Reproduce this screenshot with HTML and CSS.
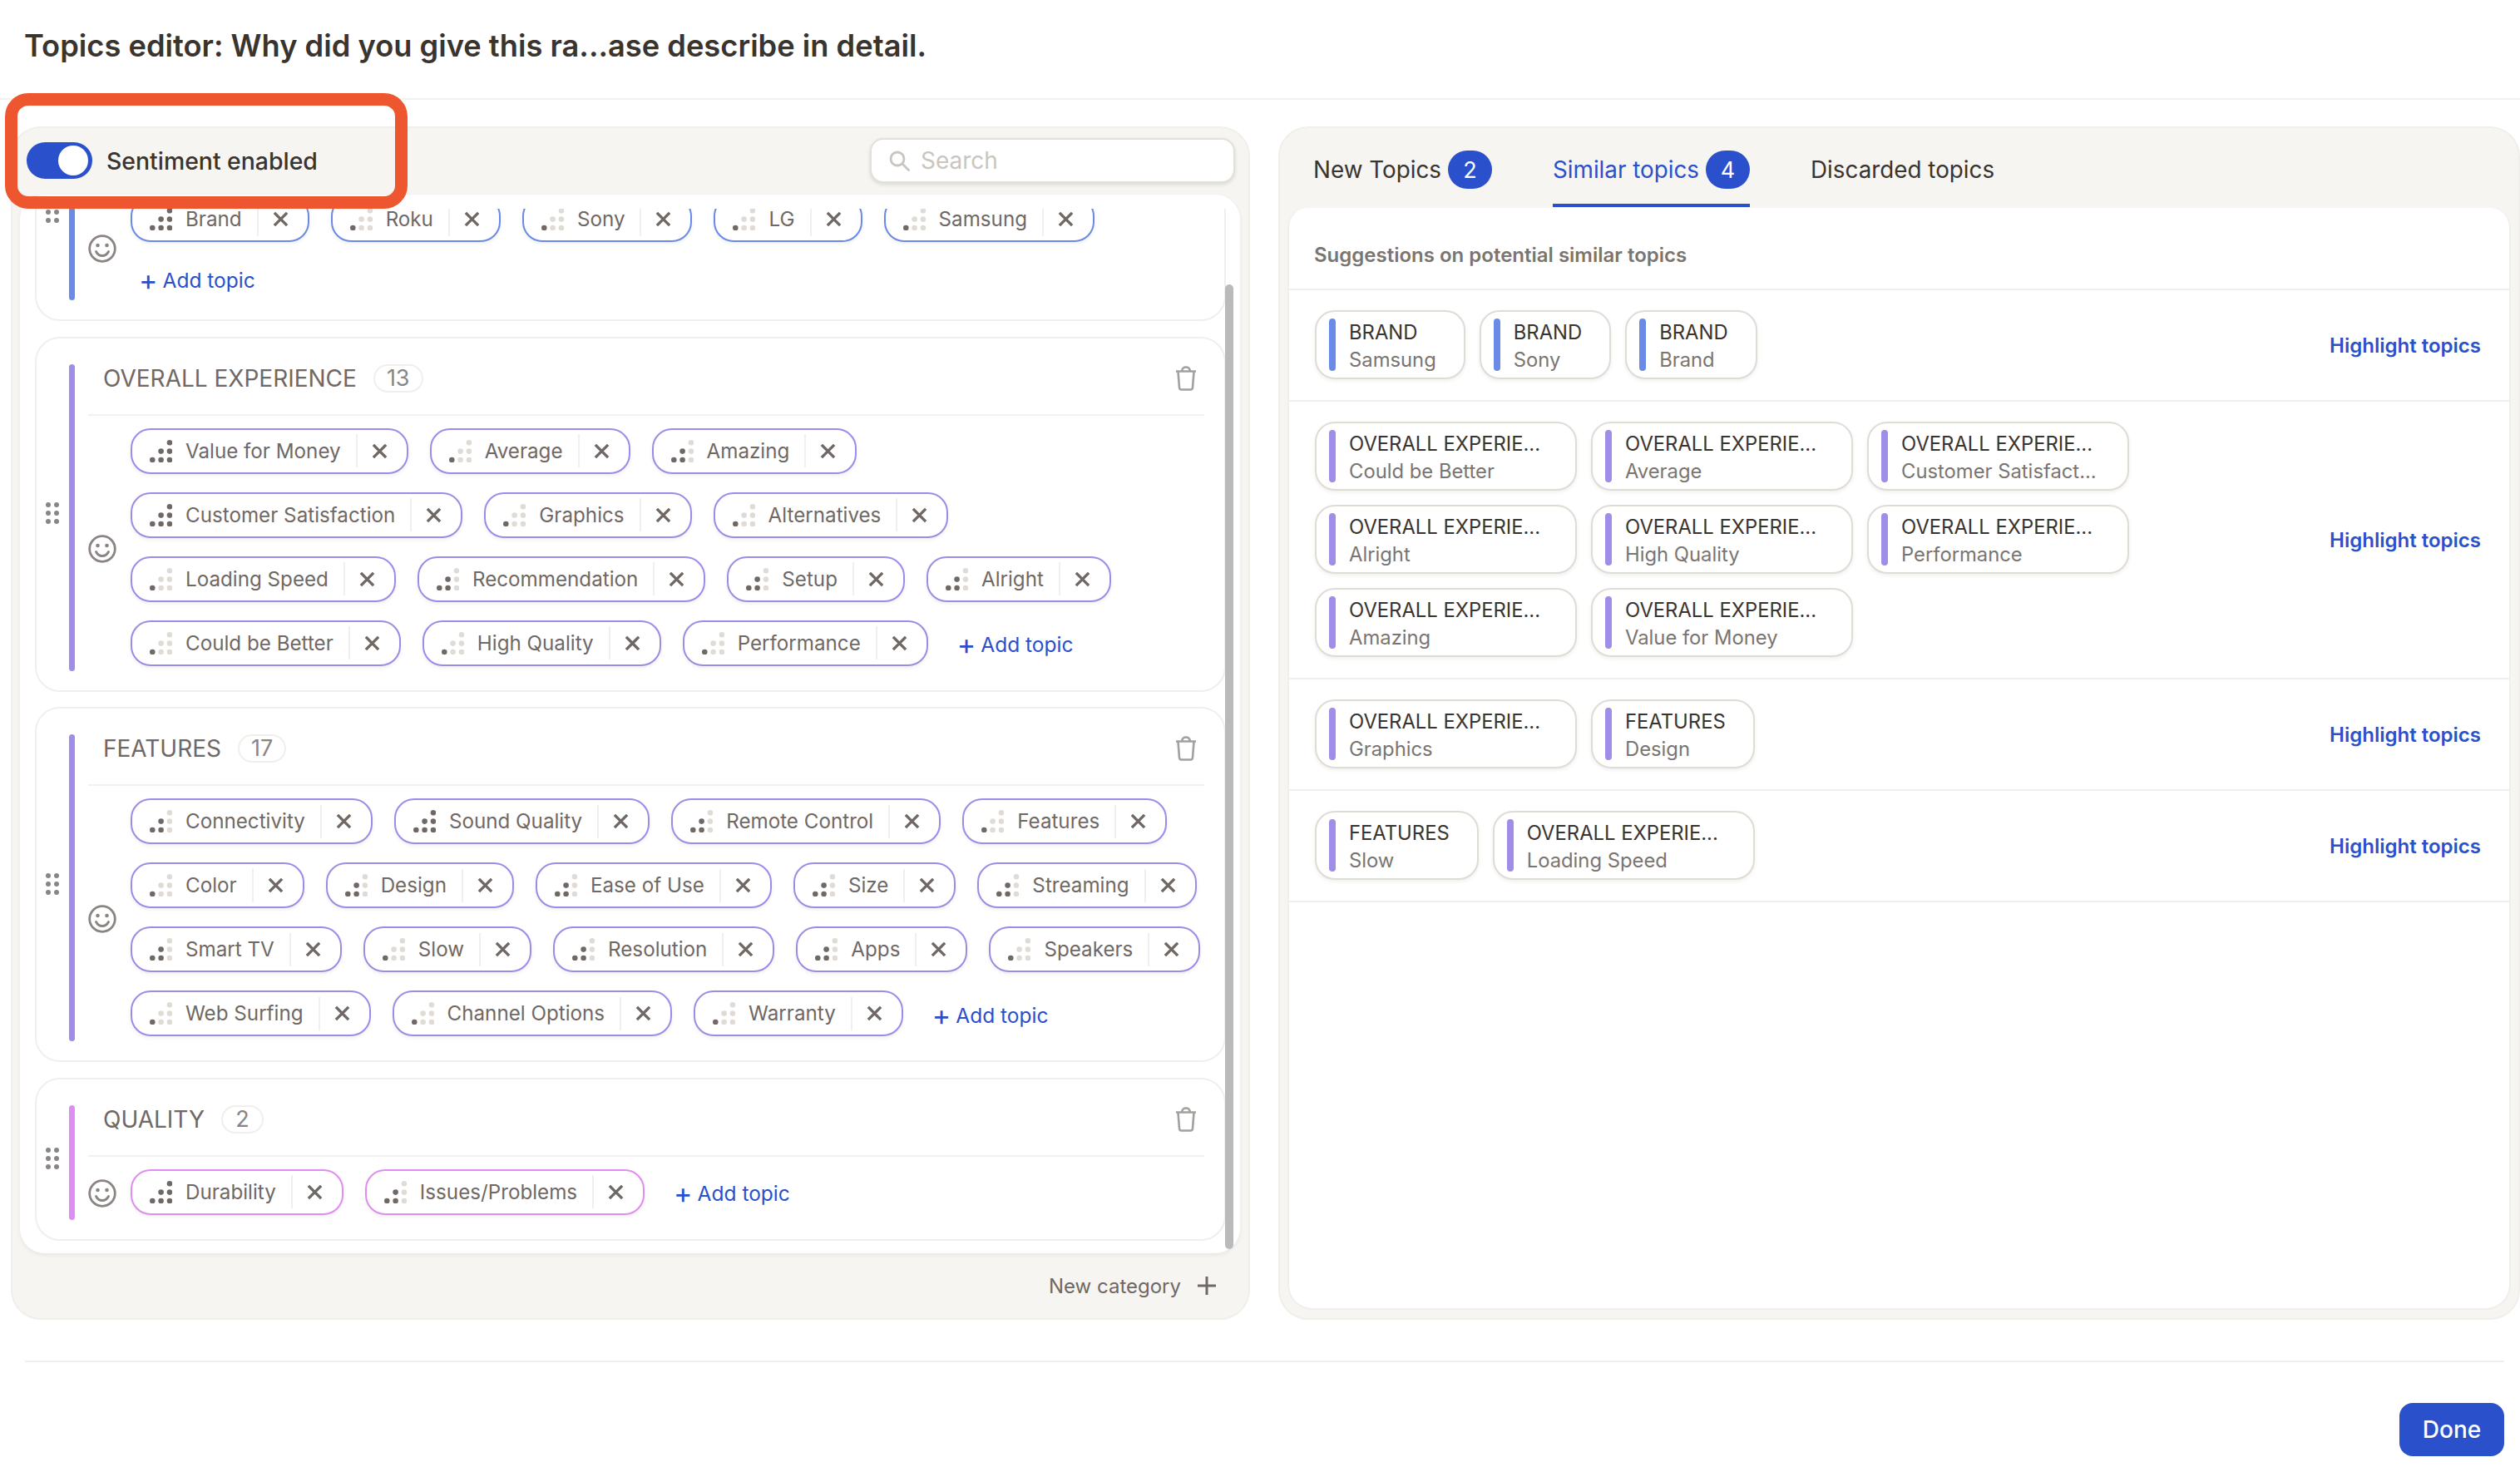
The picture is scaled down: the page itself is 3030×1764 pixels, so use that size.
FILE: index.html
```html
<!DOCTYPE html>
<html lang="en">
<head>
<meta charset="utf-8">
<title>Topics editor</title>
<link rel="stylesheet" href="styles.css">
</head>
<body>
<svg class="sprite" width="0" height="0" aria-hidden="true">
  <symbol id="sig1" viewBox="0 0 27 27"><circle class="d" cx="3.3" cy="24" r="3.3"/><circle class="l" cx="13.6" cy="24" r="3.3"/><circle class="l" cx="13.6" cy="13.6" r="3.3"/><circle class="l" cx="24" cy="24" r="3.3"/><circle class="l" cx="24" cy="13.6" r="3.3"/><circle class="l" cx="24" cy="3.3" r="3.3"/></symbol>
  <symbol id="sig2" viewBox="0 0 27 27"><circle class="d" cx="3.3" cy="24" r="3.3"/><circle class="d" cx="13.6" cy="24" r="3.3"/><circle class="d" cx="13.6" cy="13.6" r="3.3"/><circle class="l" cx="24" cy="24" r="3.3"/><circle class="l" cx="24" cy="13.6" r="3.3"/><circle class="l" cx="24" cy="3.3" r="3.3"/></symbol>
  <symbol id="sig3" viewBox="0 0 27 27"><circle class="d" cx="3.3" cy="24" r="3.3"/><circle class="d" cx="13.6" cy="24" r="3.3"/><circle class="d" cx="13.6" cy="13.6" r="3.3"/><circle class="d" cx="24" cy="24" r="3.3"/><circle class="d" cx="24" cy="13.6" r="3.3"/><circle class="d" cx="24" cy="3.3" r="3.3"/></symbol>
  <symbol id="x" viewBox="0 0 20 20"><path d="M2 2 18 18M18 2 2 18" fill="none" stroke="#6f6864" stroke-width="3.6"/></symbol>
  <symbol id="drag" viewBox="0 0 16 26"><g fill="#8a8582"><circle cx="3" cy="3" r="3"/><circle cx="13" cy="3" r="3"/><circle cx="3" cy="13" r="3"/><circle cx="13" cy="13" r="3"/><circle cx="3" cy="23" r="3"/><circle cx="13" cy="23" r="3"/></g></symbol>
  <symbol id="smile" viewBox="0 0 34 34"><circle cx="17" cy="17" r="15.3" fill="none" stroke="#8a8582" stroke-width="2.8"/><circle cx="11.5" cy="13" r="2.3" fill="#8a8582"/><circle cx="22.5" cy="13" r="2.3" fill="#8a8582"/><path d="M9.5 20.5c1.600 3.200 4.300 5 7.500 5s5.900-1.800 7.500-5" fill="none" stroke="#8a8582" stroke-width="2.8" stroke-linecap="round"/></symbol>
  <symbol id="trash" viewBox="0 0 26 30"><path d="M1 6.500h24M8 6c.5-3 2-4.500 5-4.500S17.500 3 18 6M3.500 7l1.500 19c.1 1.500 1 2.500 2.500 2.500h11c1.500 0 2.400-1 2.500-2.500l1.500-19" fill="none" stroke="#a3a09d" stroke-width="2.6" stroke-linejoin="round"/></symbol>
</svg>

<header class="title-bar">
  <h1 class="title">Topics editor: Why did you give this ra...ase describe in detail.</h1>
</header>

<main class="workspace">
  <section class="panel panel-left">
    <div class="panel-head">
      <div class="sentiment">
        <span class="toggle"><span class="knob"></span></span>
        <span class="sentiment-label">Sentiment enabled</span>
      </div>
      <div class="search">
        <svg class="search-icon" viewBox="0 0 25 25"><circle cx="10" cy="10" r="8" fill="none" stroke="#c9c5c0" stroke-width="2.8"/><path d="M16 16l7.500 7.500" stroke="#c9c5c0" stroke-width="2.8" stroke-linecap="round"/></svg>
        <span>Search</span>
      </div>
    </div>

    <div class="list-wrap">
      <div class="list">
        <article class="card card-brand card-scrolled">
          <svg class="drag"><use href="#drag"/></svg>
          <span class="bar"></span>
          <div class="card-body">
            <div class="topics">
              <svg class="smile smile-low"><use href="#smile"/></svg>
              <div class="chips">
                <div class="chip-row">
                  <span class="chip"><svg class="sig"><use href="#sig3"/></svg><span class="chip-text">Brand</span><span class="chip-x"><svg><use href="#x"/></svg></span></span>
                  <span class="chip"><svg class="sig"><use href="#sig1"/></svg><span class="chip-text">Roku</span><span class="chip-x"><svg><use href="#x"/></svg></span></span>
                  <span class="chip"><svg class="sig"><use href="#sig1"/></svg><span class="chip-text">Sony</span><span class="chip-x"><svg><use href="#x"/></svg></span></span>
                  <span class="chip"><svg class="sig"><use href="#sig1"/></svg><span class="chip-text">LG</span><span class="chip-x"><svg><use href="#x"/></svg></span></span>
                  <span class="chip"><svg class="sig"><use href="#sig1"/></svg><span class="chip-text">Samsung</span><span class="chip-x"><svg><use href="#x"/></svg></span></span>
                </div>
                <div class="chip-row chip-row-add">
                  <span class="add-topic add-topic-own"><span class="add-plus">+</span>Add topic</span>
                </div>
              </div>
            </div>
          </div>
        </article>

        <article class="card card-overall">
          <svg class="drag"><use href="#drag"/></svg>
          <span class="bar"></span>
          <div class="card-body">
            <div class="card-head"><span class="cat-name">OVERALL EXPERIENCE</span><span class="count">13</span><svg class="trash"><use href="#trash"/></svg></div>
            <div class="topics">
              <svg class="smile"><use href="#smile"/></svg>
              <div class="chips">
                <div class="chip-row">
                  <span class="chip"><svg class="sig"><use href="#sig3"/></svg><span class="chip-text">Value for Money</span><span class="chip-x"><svg><use href="#x"/></svg></span></span>
                  <span class="chip"><svg class="sig"><use href="#sig1"/></svg><span class="chip-text">Average</span><span class="chip-x"><svg><use href="#x"/></svg></span></span>
                  <span class="chip"><svg class="sig"><use href="#sig2"/></svg><span class="chip-text">Amazing</span><span class="chip-x"><svg><use href="#x"/></svg></span></span>
                </div>
                <div class="chip-row">
                  <span class="chip"><svg class="sig"><use href="#sig3"/></svg><span class="chip-text">Customer Satisfaction</span><span class="chip-x"><svg><use href="#x"/></svg></span></span>
                  <span class="chip"><svg class="sig"><use href="#sig1"/></svg><span class="chip-text">Graphics</span><span class="chip-x"><svg><use href="#x"/></svg></span></span>
                  <span class="chip"><svg class="sig"><use href="#sig1"/></svg><span class="chip-text">Alternatives</span><span class="chip-x"><svg><use href="#x"/></svg></span></span>
                </div>
                <div class="chip-row">
                  <span class="chip"><svg class="sig"><use href="#sig1"/></svg><span class="chip-text">Loading Speed</span><span class="chip-x"><svg><use href="#x"/></svg></span></span>
                  <span class="chip"><svg class="sig"><use href="#sig2"/></svg><span class="chip-text">Recommendation</span><span class="chip-x"><svg><use href="#x"/></svg></span></span>
                  <span class="chip"><svg class="sig"><use href="#sig2"/></svg><span class="chip-text">Setup</span><span class="chip-x"><svg><use href="#x"/></svg></span></span>
                  <span class="chip"><svg class="sig"><use href="#sig2"/></svg><span class="chip-text">Alright</span><span class="chip-x"><svg><use href="#x"/></svg></span></span>
                </div>
                <div class="chip-row">
                  <span class="chip"><svg class="sig"><use href="#sig1"/></svg><span class="chip-text">Could be Better</span><span class="chip-x"><svg><use href="#x"/></svg></span></span>
                  <span class="chip"><svg class="sig"><use href="#sig1"/></svg><span class="chip-text">High Quality</span><span class="chip-x"><svg><use href="#x"/></svg></span></span>
                  <span class="chip"><svg class="sig"><use href="#sig1"/></svg><span class="chip-text">Performance</span><span class="chip-x"><svg><use href="#x"/></svg></span></span>
                  <span class="add-topic"><span class="add-plus">+</span>Add topic</span>
                </div>
              </div>
            </div>
          </div>
        </article>

        <article class="card card-overall">
          <svg class="drag"><use href="#drag"/></svg>
          <span class="bar"></span>
          <div class="card-body">
            <div class="card-head"><span class="cat-name">FEATURES</span><span class="count">17</span><svg class="trash"><use href="#trash"/></svg></div>
            <div class="topics">
              <svg class="smile"><use href="#smile"/></svg>
              <div class="chips">
                <div class="chip-row">
                  <span class="chip"><svg class="sig"><use href="#sig2"/></svg><span class="chip-text">Connectivity</span><span class="chip-x"><svg><use href="#x"/></svg></span></span>
                  <span class="chip"><svg class="sig"><use href="#sig3"/></svg><span class="chip-text">Sound Quality</span><span class="chip-x"><svg><use href="#x"/></svg></span></span>
                  <span class="chip"><svg class="sig"><use href="#sig2"/></svg><span class="chip-text">Remote Control</span><span class="chip-x"><svg><use href="#x"/></svg></span></span>
                  <span class="chip"><svg class="sig"><use href="#sig1"/></svg><span class="chip-text">Features</span><span class="chip-x"><svg><use href="#x"/></svg></span></span>
                </div>
                <div class="chip-row">
                  <span class="chip"><svg class="sig"><use href="#sig1"/></svg><span class="chip-text">Color</span><span class="chip-x"><svg><use href="#x"/></svg></span></span>
                  <span class="chip"><svg class="sig"><use href="#sig2"/></svg><span class="chip-text">Design</span><span class="chip-x"><svg><use href="#x"/></svg></span></span>
                  <span class="chip"><svg class="sig"><use href="#sig2"/></svg><span class="chip-text">Ease of Use</span><span class="chip-x"><svg><use href="#x"/></svg></span></span>
                  <span class="chip"><svg class="sig"><use href="#sig2"/></svg><span class="chip-text">Size</span><span class="chip-x"><svg><use href="#x"/></svg></span></span>
                  <span class="chip"><svg class="sig"><use href="#sig2"/></svg><span class="chip-text">Streaming</span><span class="chip-x"><svg><use href="#x"/></svg></span></span>
                </div>
                <div class="chip-row">
                  <span class="chip"><svg class="sig"><use href="#sig2"/></svg><span class="chip-text">Smart TV</span><span class="chip-x"><svg><use href="#x"/></svg></span></span>
                  <span class="chip"><svg class="sig"><use href="#sig1"/></svg><span class="chip-text">Slow</span><span class="chip-x"><svg><use href="#x"/></svg></span></span>
                  <span class="chip"><svg class="sig"><use href="#sig2"/></svg><span class="chip-text">Resolution</span><span class="chip-x"><svg><use href="#x"/></svg></span></span>
                  <span class="chip"><svg class="sig"><use href="#sig2"/></svg><span class="chip-text">Apps</span><span class="chip-x"><svg><use href="#x"/></svg></span></span>
                  <span class="chip"><svg class="sig"><use href="#sig1"/></svg><span class="chip-text">Speakers</span><span class="chip-x"><svg><use href="#x"/></svg></span></span>
                </div>
                <div class="chip-row">
                  <span class="chip"><svg class="sig"><use href="#sig1"/></svg><span class="chip-text">Web Surfing</span><span class="chip-x"><svg><use href="#x"/></svg></span></span>
                  <span class="chip"><svg class="sig"><use href="#sig1"/></svg><span class="chip-text">Channel Options</span><span class="chip-x"><svg><use href="#x"/></svg></span></span>
                  <span class="chip"><svg class="sig"><use href="#sig1"/></svg><span class="chip-text">Warranty</span><span class="chip-x"><svg><use href="#x"/></svg></span></span>
                  <span class="add-topic"><span class="add-plus">+</span>Add topic</span>
                </div>
              </div>
            </div>
          </div>
        </article>

        <article class="card card-quality">
          <svg class="drag"><use href="#drag"/></svg>
          <span class="bar"></span>
          <div class="card-body">
            <div class="card-head"><span class="cat-name">QUALITY</span><span class="count">2</span><svg class="trash"><use href="#trash"/></svg></div>
            <div class="topics">
              <svg class="smile"><use href="#smile"/></svg>
              <div class="chips">
                <div class="chip-row">
                  <span class="chip"><svg class="sig"><use href="#sig3"/></svg><span class="chip-text">Durability</span><span class="chip-x"><svg><use href="#x"/></svg></span></span>
                  <span class="chip"><svg class="sig"><use href="#sig2"/></svg><span class="chip-text">Issues/Problems</span><span class="chip-x"><svg><use href="#x"/></svg></span></span>
                  <span class="add-topic"><span class="add-plus">+</span>Add topic</span>
                </div>
              </div>
            </div>
          </div>
        </article>
      </div>
      <span class="scroll-thumb"></span>
    </div>

    <div class="panel-foot">
      <span class="new-cat">New category</span>
      <svg class="new-plus" viewBox="0 0 22 22"><path d="M11 0v22M0 11h22" stroke="#6f6864" stroke-width="3"/></svg>
    </div>
    <span class="callout"></span>
  </section>

  <section class="panel panel-right">
    <nav class="tabs">
      <span class="tab"><span>New Topics</span><span class="badge">2</span></span>
      <span class="tab tab-active"><span>Similar topics</span><span class="badge">4</span></span>
      <span class="tab"><span>Discarded topics</span></span>
    </nav>
    <div class="suggest">
      <p class="suggest-title">Suggestions on potential similar topics</p>
      <div class="suggest-row">
        <div class="pairs">
          <div class="pair pair-blue"><span class="pair-bar"></span><div><div class="pair-cat">BRAND</div><div class="pair-topic">Samsung</div></div></div>
          <div class="pair pair-blue"><span class="pair-bar"></span><div><div class="pair-cat">BRAND</div><div class="pair-topic">Sony</div></div></div>
          <div class="pair pair-blue"><span class="pair-bar"></span><div><div class="pair-cat">BRAND</div><div class="pair-topic">Brand</div></div></div>
        </div>
        <span class="highlight">Highlight topics</span>
      </div>
      <div class="suggest-row">
        <div class="pairs">
          <div class="pair pair-wide"><span class="pair-bar"></span><div><div class="pair-cat">OVERALL EXPERIE...</div><div class="pair-topic">Could be Better</div></div></div>
          <div class="pair pair-wide"><span class="pair-bar"></span><div><div class="pair-cat">OVERALL EXPERIE...</div><div class="pair-topic">Average</div></div></div>
          <div class="pair pair-wide"><span class="pair-bar"></span><div><div class="pair-cat">OVERALL EXPERIE...</div><div class="pair-topic">Customer Satisfact...</div></div></div>
          <div class="pair pair-wide"><span class="pair-bar"></span><div><div class="pair-cat">OVERALL EXPERIE...</div><div class="pair-topic">Alright</div></div></div>
          <div class="pair pair-wide"><span class="pair-bar"></span><div><div class="pair-cat">OVERALL EXPERIE...</div><div class="pair-topic">High Quality</div></div></div>
          <div class="pair pair-wide"><span class="pair-bar"></span><div><div class="pair-cat">OVERALL EXPERIE...</div><div class="pair-topic">Performance</div></div></div>
          <div class="pair pair-wide"><span class="pair-bar"></span><div><div class="pair-cat">OVERALL EXPERIE...</div><div class="pair-topic">Amazing</div></div></div>
          <div class="pair pair-wide"><span class="pair-bar"></span><div><div class="pair-cat">OVERALL EXPERIE...</div><div class="pair-topic">Value for Money</div></div></div>
        </div>
        <span class="highlight">Highlight topics</span>
      </div>
      <div class="suggest-row">
        <div class="pairs">
          <div class="pair pair-wide"><span class="pair-bar"></span><div><div class="pair-cat">OVERALL EXPERIE...</div><div class="pair-topic">Graphics</div></div></div>
          <div class="pair"><span class="pair-bar"></span><div><div class="pair-cat">FEATURES</div><div class="pair-topic">Design</div></div></div>
        </div>
        <span class="highlight">Highlight topics</span>
      </div>
      <div class="suggest-row">
        <div class="pairs">
          <div class="pair"><span class="pair-bar"></span><div><div class="pair-cat">FEATURES</div><div class="pair-topic">Slow</div></div></div>
          <div class="pair pair-wide"><span class="pair-bar"></span><div><div class="pair-cat">OVERALL EXPERIE...</div><div class="pair-topic">Loading Speed</div></div></div>
        </div>
        <span class="highlight">Highlight topics</span>
      </div>
    </div>
  </section>
</main>

<footer class="footer">
  <button class="done" type="button">Done</button>
</footer>
</body>
</html>
```
FILE: styles.css
```css
* { box-sizing: border-box; }
html, body { margin: 0; padding: 0; background: #fff; }
body { width: 3030px; height: 1764px; overflow: hidden; font-family: Inter, "Liberation Sans", sans-serif; color: #3a342e; }
.sprite { position: absolute; }

.title-bar { height: 120px; padding: 35px 0 0 29px; border-bottom: 2px solid #f3f1ee; }
.title { margin: 0; font-size: 36.25px; line-height: 40px; font-weight: 600; color: #3a342e; }

.workspace { display: flex; gap: 34px; padding: 32px 0 0 13px; height: 1467px; }
.panel { position: relative; background: #f6f5f2; border: 2px solid #f1efeb; border-radius: 36px; display: flex; flex-direction: column; height: 1435px; }
.panel-left { width: 1490px; flex: none; }
.panel-right { flex: 1; min-width: 0; }

.panel-head { height: 80px; padding: 0 16px 2px 17px; display: flex; align-items: center; justify-content: space-between; }
.sentiment { display: flex; align-items: center; gap: 17px; }
.toggle { width: 79px; height: 44px; border-radius: 22px; background: #2a50cc; display: flex; align-items: center; justify-content: flex-end; padding-right: 5px; }
.knob { width: 36px; height: 36px; border-radius: 50%; background: #fff; }
.sentiment-label { font-size: 28.4px; font-weight: 500; color: #3a342e; }
.search { width: 439px; height: 54px; background: #fff; border: 2px solid #e3dfd9; border-radius: 16px; box-shadow: 0 2px 4px rgba(60,50,40,.14); display: flex; align-items: center; gap: 13px; padding-left: 21px; font-size: 28px; color: #c9c5c0; }
.search-icon { width: 25px; height: 25px; }

.list-wrap { position: relative; flex: 1; min-height: 0; margin: 0 10px 0 9px; background: #fff; border-radius: 30px; padding-top: 17px; box-shadow: 0 2px 5px rgba(60,50,40,.08); display: flex; }
.list { flex: 1; min-width: 0; overflow: hidden; padding: 0 17px 17px 18px; display: flex; flex-direction: column; gap: 18.5px; }
.scroll-thumb { position: absolute; left: 1449px; top: 108px; width: 10px; height: 1160px; border-radius: 5px; background: #bababa; }

.card { flex: none; display: flex; align-items: stretch; padding: 31px 24px 23px 13px; border: 2px solid #f1efeb; border-radius: 30px; background: #fff; }
.card-scrolled { margin-top: -63px; }
.drag { width: 16px; height: 26px; align-self: center; margin: 0 10px 0 -2px; position: relative; top: -5px; flex: none; }
.card-scrolled .drag { top: -36px; }
.bar { width: 7px; border-radius: 4px; flex: none; margin-right: 16px; margin-left: 2px; }
.card-brand .bar { background: #6a8ae8; }
.card-overall .bar { background: #a08de8; }
.card-quality .bar { background: #dc8ff0; }
.card-body { flex: 1; min-width: 0; }
.card-head { height: 62px; padding: 0 9px 26px 18px; border-bottom: 2px solid #f3f1ee; display: flex; align-items: center; }
.cat-name { font-size: 28px; color: #6f6864; }
.count { margin-left: 20px; height: 34px; min-width: 51px; padding: 0 14px; border: 2px solid #f1efeb; border-radius: 17px; font-size: 27px; line-height: 30px; text-align: center; color: #8a8582; }
.trash { width: 26px; height: 30px; margin-left: auto; }
.topics { display: flex; align-items: center; margin-top: 15px; margin-bottom: 6px; }
.smile { width: 34px; height: 34px; flex: none; margin-right: 17px; position: relative; top: 2px; }
.smile-low { top: 3px; }
.chips { flex: 1; min-width: 0; display: flex; flex-direction: column; gap: 22px; }
.chip-row { display: flex; align-items: center; gap: 26px; }
.chip { height: 55px; display: inline-flex; align-items: center; border: 2px solid; border-radius: 24px; background: #fff; box-shadow: 0 2px 4px rgba(60,50,40,.08); padding-left: 21px; }
.card-brand .chip { border-color: #6a8ae8; }
.card-overall .chip { border-color: #9f8ae8; }
.card-quality .chip { border-color: #df8df0; }
.sig { width: 27px; height: 27px; flex: none; margin-right: 16px; }
symbol .d { fill: #6f6864; }
symbol .l { fill: #e0dbd5; }
.chip-text { font-size: 24.2px; color: #6f6864; white-space: nowrap; }
.chip-x { margin-left: 18px; width: 61px; height: 40px; border-left: 2px solid #f1efeb; display: flex; align-items: center; padding-left: 17px; flex: none; }
.chip-x svg { width: 19px; height: 19px; display: block; }
.add-topic { font-size: 24.5px; color: #2a50cc; white-space: nowrap; display: inline-flex; align-items: center; margin-left: 9px; height: 40px; position: relative; top: 2px; }
.chip-row-add { height: 42px; }
.add-topic-own { margin-left: 10px; height: 36px; margin-top: 6px; top: 0; }
.add-plus { font-size: 34px; line-height: 30px; margin-right: 6px; }

.panel-foot { height: 78px; padding: 0 39px 0 0; display: flex; align-items: center; justify-content: flex-end; gap: 20px; }
.new-cat { font-size: 24px; color: #6f6864; }
.new-plus { width: 22px; height: 22px; }

.callout { position: absolute; left: -9px; top: -42px; width: 484px; height: 139px; border: 15px solid #ee5630; border-radius: 28px; }

.tabs { height: 96px; padding: 27px 0 0 40px; display: flex; gap: 73px; }
.tab { height: 68px; padding-bottom: 18px; border-bottom: 4px solid transparent; display: flex; align-items: center; gap: 8px; font-size: 27.8px; color: #3a342e; }
.tab-active { color: #2a50cc; border-bottom-color: #2a50cc; }
.badge { width: 53px; height: 46px; border-radius: 23px; background: #2a50cc; color: #fff; font-size: 27px; display: flex; align-items: center; justify-content: center; }

.suggest { flex: 1; min-height: 0; margin: 0 9px 10px; background: #fff; border: 2px solid #f1efeb; border-top: 0; border-radius: 24px 24px 30px 30px; }
.suggest-title { margin: 0; height: 99px; padding: 42px 0 0 30px; font-size: 24px; line-height: 30px; font-weight: 600; color: #7a7571; border-bottom: 2px solid #f1efeb; }
.suggest-row { display: flex; align-items: center; justify-content: space-between; padding: 24px 34px 25px 31px; border-bottom: 2px solid #f1efeb; }
.pairs { display: flex; flex-wrap: wrap; gap: 17px; max-width: 1000px; }
.pair { height: 83px; display: flex; align-items: stretch; gap: 16px; padding: 8px 33px 8px 15px; border: 2px solid #e0dbd5; border-radius: 24px; background: #fff; box-shadow: 0 2px 4px rgba(60,50,40,.08); }
.pair-wide { width: 315px; }
.pair-bar { width: 8px; border-radius: 4px; background: #a08de8; flex: none; }
.pair-blue .pair-bar { background: #6a8ae8; }
.pair-cat { font-size: 23.8px; line-height: 33px; color: #3a342e; white-space: nowrap; }
.pair-topic { font-size: 23.8px; line-height: 33px; color: #7a7571; white-space: nowrap; }
.highlight { padding-top: 2px; font-size: 24px; font-weight: 600; color: #2a50cc; white-space: nowrap; }

.footer { margin: 49px 19px 0 30px; border-top: 2px solid #f1efeb; padding-top: 49px; display: flex; justify-content: flex-end; }
.done { width: 126px; height: 64px; border: 0; border-radius: 16px; background: #2a50cc; color: #fff; font: 500 28px Inter, "Liberation Sans", sans-serif; }
```
